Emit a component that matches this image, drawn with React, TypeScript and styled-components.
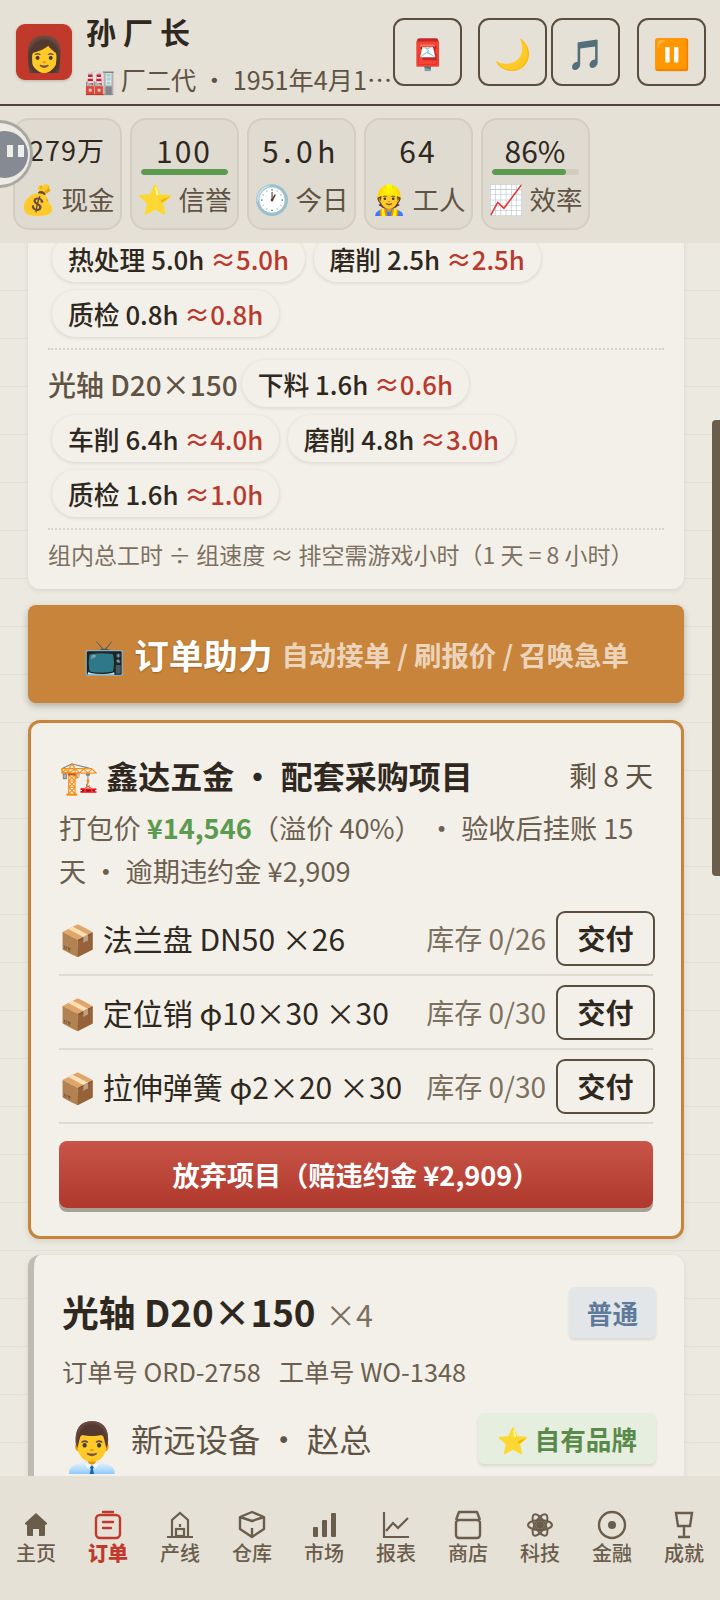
import React from "react";
import styled, { createGlobalStyle } from "styled-components";

const GlobalStyle = createGlobalStyle`
  html, body {
    margin: 0;
    padding: 0;
    background: #e6e1d6;
  }
  * {
    box-sizing: border-box;
  }
`;

const sans = `"Noto Sans CJK SC", "Noto Sans", sans-serif`;

const Page = styled.div`
  position: relative;
  width: 720px;
  height: 1600px;
  overflow: hidden;
  display: flex;
  flex-direction: column;
  font-family: ${sans};
  color: #2e2820;
`;

/* header */
const Header = styled.header`
  height: 106px;
  flex-shrink: 0;
  display: flex;
  align-items: flex-start;
  padding: 18px 14px 0 16px;
  background: #e6e1d6;
  border-bottom: 2px solid #4f4435;
`;

const Avatar = styled.div`
  width: 56px;
  height: 56px;
  margin-top: 6px;
  flex-shrink: 0;
  border-radius: 9px;
  background: #c0392b;
  box-shadow: 0 1px 3px rgba(0, 0, 0, 0.2);
  display: flex;
  align-items: center;
  justify-content: center;
  font-size: 34px;
  line-height: 1;
`;

const Identity = styled.div`
  width: 309px;
  margin-left: 12px;
  flex-shrink: 0;
`;

const Boss = styled.div`
  margin-left: 2px;
  font-size: 30px;
  line-height: 30px;
  font-weight: 700;
  letter-spacing: 7px;
  margin-top: -2px;
`;

const SubLine = styled.div`
  margin-top: 15px;
  font-size: 25.2px;
  line-height: 36px;
  color: #5f5343;
  white-space: nowrap;
  overflow: hidden;
  text-overflow: ellipsis;
`;

const IconBtn = styled.div<{ $gap: number }>`
  width: 69px;
  height: 68px;
  flex-shrink: 0;
  margin-left: ${(p) => p.$gap}px;
  border: 2px solid #5a4e3e;
  border-radius: 11px;
  display: flex;
  align-items: center;
  justify-content: center;
  font-size: 30px;
  line-height: 1;
`;

/* stats */
const StatBar = styled.div`
  height: 137px;
  flex-shrink: 0;
  display: flex;
  gap: 8px;
  padding: 12px 0 0 12.5px;
  background: #e6e1d6;
`;

const Stat = styled.div`
  position: relative;
  width: 109px;
  height: 112px;
  border: 2px solid #d4cec2;
  border-radius: 16px;
  background: #e0dbd0;
  text-align: center;
`;

const StatValue = styled.div<{ $size?: number; $track?: number }>`
  margin-top: 12px;
  font-size: ${(p) => p.$size ?? 30}px;
  line-height: 36px;
  letter-spacing: ${(p) => p.$track ?? 2}px;
  white-space: nowrap;
`;

const StatBarTrack = styled.div`
  position: absolute;
  left: 9px;
  right: 9px;
  top: 49px;
  height: 6px;
  border-radius: 3px;
  background: #d2ccc0;
  overflow: hidden;
`;

const StatBarFill = styled.div`
  height: 100%;
  background: #5c9a50;
  border-radius: 3px;
`;

const StatLabel = styled.div`
  margin-top: 11px;
  font-size: 26.5px;
  line-height: 36px;
  color: #5f5343;
  white-space: nowrap;

  i {
    font-style: normal;
    font-size: 29px;
  }
`;

/* scrolling middle */
const Main = styled.main`
  flex: 1;
  min-height: 0;
  overflow: hidden;
  padding: 0 36px 0 28px;
  background-color: #ece9e0;
  background-image: repeating-linear-gradient(
    to bottom,
    transparent 0,
    transparent 47px,
    #e4e0d6 47px,
    #e4e0d6 48px
  );
`;

const Card = styled.section`
  margin-top: -22px;
  padding: 10px 20px 17px;
  border-radius: 12px;
  background: #f3f0e9;
  box-shadow: 0 2px 5px rgba(0, 0, 0, 0.08);
`;

const ChipRow = styled.div`
  display: flex;
  flex-wrap: wrap;
  align-items: center;
`;

const Part = styled.span`
  font-size: 28px;
  line-height: 46px;
  font-weight: 500;
  color: #5f5343;
  white-space: nowrap;
`;

const Chip = styled.span`
  height: 47px;
  margin: 4px 4.5px 4px 4px;
  padding: 0 16px;
  border-radius: 24px;
  background: #f3f0e9;
  box-shadow: 0 1px 4px rgba(0, 0, 0, 0.12);
  font-size: 25.8px;
  line-height: 47px;
  font-weight: 500;
  white-space: nowrap;

  b {
    font-weight: 500;
    color: #b83a2e;
  }
`;

const Divider = styled.div`
  margin: 7px 0 6px;
  border-top: 2px dotted #d8d3c8;
`;

const Note = styled.div`
  margin-top: 6px;
  font-size: 23px;
  line-height: 36px;
  color: #7c7061;
  white-space: nowrap;
`;

const Banner = styled.div`
  margin-top: 16px;
  height: 98px;
  border-radius: 8px;
  background: #c8843a;
  box-shadow: 0 3px 7px rgba(0, 0, 0, 0.25);
  display: flex;
  align-items: center;
  justify-content: center;
  color: #fff;
  white-space: nowrap;
`;

const BannerIcon = styled.span`
  font-size: 34px;
  margin-right: 9px;
`;

const BannerTitle = styled.span`
  font-size: 34.6px;
  font-weight: 700;
  text-shadow: 0 1px 2px rgba(0, 0, 0, 0.25);
`;

const BannerSub = styled.span`
  margin-left: 9px;
  font-size: 27.4px;
  font-weight: 700;
  color: rgba(255, 255, 255, 0.68);
`;

const ProjectCard = styled.section`
  margin-top: 17px;
  height: 519px;
  padding: 27px 28px 0;
  border: 3px solid #c8843a;
  border-radius: 12px;
  background: #f3f0e9;
  box-shadow: 0 2px 6px rgba(0, 0, 0, 0.1);
`;

const ProjectHead = styled.div`
  display: flex;
  align-items: center;
  justify-content: space-between;
`;

const ProjectTitle = styled.div`
  font-size: 32px;
  line-height: 50px;
  font-weight: 700;
  white-space: nowrap;
`;

const Remain = styled.div`
  font-size: 28px;
  color: #5f5343;
`;

const ProjectMeta = styled.div`
  margin: 6px 0 10px;
  font-size: 27.2px;
  line-height: 43px;
  color: #6b5f4f;

  b {
    font-weight: 700;
    color: #5c9a50;
  }
`;

const Item = styled.div`
  height: 74px;
  display: flex;
  align-items: center;
  border-bottom: 2px solid #dfdbd0;
  font-size: 30px;
  white-space: nowrap;
`;

const ItemName = styled.div`
  flex: 1;
`;

const Stock = styled.div`
  margin-right: 10px;
  font-size: 28px;
  color: #7c7061;
`;

const Deliver = styled.div`
  width: 99px;
  height: 55px;
  margin-right: -2px;
  border: 2px solid #5a4e3e;
  border-radius: 9px;
  text-align: center;
  font-size: 28px;
  line-height: 50px;
  font-weight: 700;
`;

const Abandon = styled.div`
  height: 67px;
  margin-top: 17px;
  border-radius: 8px;
  background: linear-gradient(to bottom, #c75548, #b0382c);
  box-shadow: 0 4px 0 #a8a296;
  color: #fff;
  text-align: center;
  font-size: 27.2px;
  line-height: 67px;
  font-weight: 700;
`;

const OrderCard = styled.section`
  margin-top: 16px;
  height: 260px;
  padding: 24px 28px 0 28px;
  border-left: 6px solid #c0bbb0;
  border-radius: 12px 12px 0 0;
  background: #f3f0e9;
  box-shadow: 0 2px 6px rgba(0, 0, 0, 0.08);
`;

const OrderHead = styled.div`
  display: flex;
  align-items: flex-start;
  justify-content: space-between;
`;

const OrderTitle = styled.div`
  font-size: 36.8px;
  line-height: 64px;
  font-weight: 700;
  white-space: nowrap;

  span {
    margin-left: 10px;
    font-size: 30.4px;
    font-weight: 400;
    color: #7c7061;
  }
`;

const Tag = styled.div<{ $tone: string; $bg: string; $top?: number; $pad: number }>`
  height: 51px;
  margin-top: ${(p) => p.$top ?? 0}px;
  padding: 0 ${(p) => p.$pad}px;
  border-radius: 6px;
  background: ${(p) => p.$bg};
  box-shadow: 0 2px 3px rgba(0, 0, 0, 0.1);
  color: ${(p) => p.$tone};
  font-size: 25.6px;
  line-height: 51px;
  font-weight: 700;
  white-space: nowrap;
`;

const OrderNo = styled.div`
  margin-top: 6px;
  font-size: 25.3px;
  line-height: 38px;
  color: #6b5f4f;
  white-space: nowrap;

  span + span {
    margin-left: 18px;
  }
`;

const ClientRow = styled.div`
  margin-top: 19px;
  display: flex;
  align-items: center;
  justify-content: space-between;
`;

const Client = styled.div`
  display: flex;
  align-items: center;
  font-size: 32.3px;
  color: #5f5343;
  white-space: nowrap;

  i {
    font-style: normal;
    font-size: 48px;
    line-height: 1;
    margin: 10px 9px 0 0;
  }
`;

/* bottom tabs */
const TabBar = styled.nav`
  height: 124px;
  flex-shrink: 0;
  display: grid;
  grid-template-columns: repeat(10, 72px);
  background: #e6e1d6;
`;

const Tab = styled.div<{ $active?: boolean }>`
  padding-top: 33px;
  display: flex;
  flex-direction: column;
  align-items: center;
  color: ${(p) => (p.$active ? "#c0392b" : "#6b5d4c")};
  font-size: 20px;
  line-height: 28px;
  font-weight: ${(p) => (p.$active ? 900 : 500)};

  svg {
    display: block;
    width: 32px;
    height: 32px;
    margin-bottom: -2px;
  }
`;

/* overlays */
const FloatBall = styled.div`
  position: absolute;
  left: -35px;
  top: 120px;
  width: 68px;
  height: 68px;
  border-radius: 50%;
  border: 3px solid #a8a8a4;
  background: rgba(240, 238, 230, 0.8);

  &::after {
    content: "";
    position: absolute;
    left: 13px;
    top: 8px;
    width: 47px;
    height: 47px;
    border-radius: 50%;
    background: rgba(125, 130, 140, 0.92);
  }
`;

const FloatPause = styled.div`
  position: absolute;
  left: 7px;
  top: 145px;
  width: 17px;
  height: 12px;
  border-left: 6px solid #eeeeea;
  border-right: 6px solid #eeeeea;
`;

const ScrollThumb = styled.div`
  position: absolute;
  right: 0;
  top: 420px;
  width: 8px;
  height: 456px;
  border-radius: 4px 0 0 4px;
  background: #6b5d4c;
`;

const tabs: { label: string; active?: boolean; icon: React.ReactNode }[] = [
  {
    label: "主页",
    icon: <path d="M16 4 L27 14 Q27.5 16 25 16 V26 Q25 27 24 27 H19 V20 H13 V27 H8 Q7 27 7 26 V16 Q4.5 16 5 14 Z" fill="currentColor" />,
  },
  {
    label: "订单",
    active: true,
    icon: (
      <g fill="none" stroke="currentColor" strokeWidth="2.4" strokeLinecap="round">
        <rect x="4" y="6" width="24" height="23" rx="4" />
        <path d="M11 3 H21 M11 13 H21 M11 19 H19" />
      </g>
    ),
  },
  {
    label: "产线",
    icon: (
      <g fill="none" stroke="currentColor" strokeWidth="2.2">
        <path d="M8 27 V11 L16 4 L24 11 V27 M3 28 H29" />
        <rect x="12" y="20" width="8" height="7" />
        <path d="M16 15 V18" />
      </g>
    ),
  },
  {
    label: "仓库",
    icon: (
      <g fill="none" stroke="currentColor" strokeWidth="2.4" strokeLinejoin="round">
        <path d="M16 3 L28 8 V20 L16 28 L4 20 V8 Z M4 8 L16 12 L28 8 M16 19 V28" />
      </g>
    ),
  },
  {
    label: "市场",
    icon: (
      <g fill="currentColor">
        <rect x="5" y="18" width="5" height="10" rx="1" />
        <rect x="14" y="11" width="5" height="17" rx="1" />
        <rect x="23" y="4" width="5" height="24" rx="1" />
      </g>
    ),
  },
  {
    label: "报表",
    icon: (
      <g fill="none" stroke="currentColor" strokeWidth="2.2">
        <path d="M4 3 V28 H29 M6 22 L13 14 L18 19 L28 9" />
      </g>
    ),
  },
  {
    label: "商店",
    icon: (
      <g fill="none" stroke="currentColor" strokeWidth="2.4" strokeLinejoin="round">
        <rect x="4" y="11" width="24" height="18" rx="3" />
        <path d="M4 11 L7 3 H25 L28 11" />
      </g>
    ),
  },
  {
    label: "科技",
    icon: (
      <g fill="none" stroke="currentColor" strokeWidth="2">
        <ellipse cx="16" cy="16" rx="12" ry="5" />
        <ellipse cx="16" cy="16" rx="12" ry="5" transform="rotate(60 16 16)" />
        <ellipse cx="16" cy="16" rx="12" ry="5" transform="rotate(120 16 16)" />
        <circle cx="16" cy="16" r="3" fill="currentColor" />
      </g>
    ),
  },
  {
    label: "金融",
    icon: (
      <g>
        <circle cx="16" cy="16" r="13" fill="none" stroke="currentColor" strokeWidth="2.4" />
        <circle cx="16" cy="16" r="4" fill="currentColor" />
      </g>
    ),
  },
  {
    label: "成就",
    icon: (
      <g fill="none" stroke="currentColor" strokeWidth="2.4">
        <path d="M8 4 H24 L22 17 H10 Z M16 17 V27 M10 28 H22" />
      </g>
    ),
  },
];

const App = () => {
  return (
    <Page>
      <GlobalStyle />
      <Header>
        <Avatar>👩</Avatar>
        <Identity>
          <Boss>孙厂长</Boss>
          <SubLine>🏭 厂二代 · 1951年4月12日 周三</SubLine>
        </Identity>
        <IconBtn $gap={0}>📮</IconBtn>
        <IconBtn $gap={16}>🌙</IconBtn>
        <IconBtn $gap={4}>🎵</IconBtn>
        <IconBtn $gap={17}>⏸️</IconBtn>
      </Header>
      <StatBar>
        <Stat>
          <StatValue $size={27} $track={1}>
            279万
          </StatValue>
          <StatLabel>
            <i>💰</i> 现金
          </StatLabel>
        </Stat>
        <Stat>
          <StatValue>100</StatValue>
          <StatBarTrack>
            <StatBarFill style={{ width: "100%" }} />
          </StatBarTrack>
          <StatLabel>
            <i>⭐</i> 信誉
          </StatLabel>
        </Stat>
        <Stat>
          <StatValue $track={4.5}>5.0h</StatValue>
          <StatLabel>
            <i>🕐</i> 今日
          </StatLabel>
        </Stat>
        <Stat>
          <StatValue>64</StatValue>
          <StatLabel>
            <i>👷</i> 工人
          </StatLabel>
        </Stat>
        <Stat>
          <StatValue $track={0}>86%</StatValue>
          <StatBarTrack>
            <StatBarFill style={{ width: "86%" }} />
          </StatBarTrack>
          <StatLabel>
            <i>📈</i> 效率
          </StatLabel>
        </Stat>
      </StatBar>
      <Main>
        <Card>
          <ChipRow>
            <Chip>
              热处理 5.0h <b>≈5.0h</b>
            </Chip>
            <Chip>
              磨削 2.5h <b>≈2.5h</b>
            </Chip>
            <Chip>
              质检 0.8h <b>≈0.8h</b>
            </Chip>
          </ChipRow>
          <Divider />
          <ChipRow>
            <Part>光轴 D20×150</Part>
            <Chip>
              下料 1.6h <b>≈0.6h</b>
            </Chip>
            <Chip>
              车削 6.4h <b>≈4.0h</b>
            </Chip>
            <Chip>
              磨削 4.8h <b>≈3.0h</b>
            </Chip>
            <Chip>
              质检 1.6h <b>≈1.0h</b>
            </Chip>
          </ChipRow>
          <Divider />
          <Note>组内总工时 ÷ 组速度 ≈ 排空需游戏小时（1 天 = 8 小时）</Note>
        </Card>
        <Banner>
          <BannerIcon>📺</BannerIcon>
          <BannerTitle>订单助力</BannerTitle>
          <BannerSub>自动接单 / 刷报价 / 召唤急单</BannerSub>
        </Banner>
        <ProjectCard>
          <ProjectHead>
            <ProjectTitle>🏗️ 鑫达五金 · 配套采购项目</ProjectTitle>
            <Remain>剩 8 天</Remain>
          </ProjectHead>
          <ProjectMeta>
            打包价 <b>¥14,546</b>（溢价 40%） · 验收后挂账 15 天 · 逾期违约金 ¥2,909
          </ProjectMeta>
          <Item>
            <ItemName>📦 法兰盘 DN50 ×26</ItemName>
            <Stock>库存 0/26</Stock>
            <Deliver>交付</Deliver>
          </Item>
          <Item>
            <ItemName>📦 定位销 φ10×30 ×30</ItemName>
            <Stock>库存 0/30</Stock>
            <Deliver>交付</Deliver>
          </Item>
          <Item>
            <ItemName>📦 拉伸弹簧 φ2×20 ×30</ItemName>
            <Stock>库存 0/30</Stock>
            <Deliver>交付</Deliver>
          </Item>
          <Abandon>放弃项目（赔违约金 ¥2,909）</Abandon>
        </ProjectCard>
        <OrderCard>
          <OrderHead>
            <OrderTitle>
              光轴 D20×150<span>×4</span>
            </OrderTitle>
            <Tag $tone="#5d7a9a" $bg="#e3e6e8" $top={8} $pad={18}>
              普通
            </Tag>
          </OrderHead>
          <OrderNo>
            <span>订单号 ORD-2758</span>
            <span>工单号 WO-1348</span>
          </OrderNo>
          <ClientRow>
            <Client>
              <i>👨‍💼</i>新远设备 · 赵总
            </Client>
            <Tag $tone="#5a8a4a" $bg="#e6efdf" $pad={19}>
              ⭐ 自有品牌
            </Tag>
          </ClientRow>
        </OrderCard>
      </Main>
      <TabBar>
        {tabs.map((t) => (
          <Tab key={t.label} $active={t.active}>
            <svg viewBox="0 0 32 32">{t.icon}</svg>
            {t.label}
          </Tab>
        ))}
      </TabBar>
      <FloatBall />
      <FloatPause />
      <ScrollThumb />
    </Page>
  );
};

export default App;
